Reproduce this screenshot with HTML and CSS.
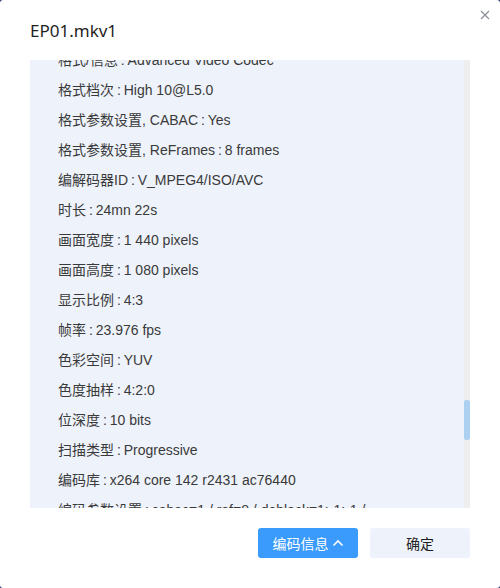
FILE: index.html
```html
<!DOCTYPE html>
<html lang="zh-CN">
<head>
<meta charset="utf-8">
<title>EP01.mkv1</title>
<link rel="stylesheet" href="styles.css">
</head>
<body>
<div class="dialog">
  <button class="close" aria-label="关闭">
    <svg width="10" height="10" viewBox="0 0 10 10"><path d="M1 1L9 9M9 1L1 9" stroke="#8a8f99" stroke-width="1.2" fill="none"/></svg>
  </button>
  <div class="title">EP01.mkv1</div>
  <div class="panel">
    <ul class="list">
      <li>格式/信息<span class="sep"> : </span>Advanced Video Codec</li>
      <li>格式档次<span class="sep"> : </span>High 10@L5.0</li>
      <li>格式参数设置, CABAC<span class="sep"> : </span>Yes</li>
      <li>格式参数设置, ReFrames<span class="sep"> : </span>8 frames</li>
      <li>编解码器ID<span class="sep"> : </span>V_MPEG4/ISO/AVC</li>
      <li>时长<span class="sep"> : </span>24mn 22s</li>
      <li>画面宽度<span class="sep"> : </span>1 440 pixels</li>
      <li>画面高度<span class="sep"> : </span>1 080 pixels</li>
      <li>显示比例<span class="sep"> : </span>4:3</li>
      <li>帧率<span class="sep"> : </span>23.976 fps</li>
      <li>色彩空间<span class="sep"> : </span>YUV</li>
      <li>色度抽样<span class="sep"> : </span>4:2:0</li>
      <li>位深度<span class="sep"> : </span>10 bits</li>
      <li>扫描类型<span class="sep"> : </span>Progressive</li>
      <li>编码库<span class="sep"> : </span>x264 core 142 r2431 ac76440</li>
      <li>编码参数设置<span class="sep"> : </span>cabac=1 / ref=8 / deblock=1:-1:-1 /</li>
    </ul>
    <div class="track"><div class="thumb"></div></div>
  </div>
  <div class="footer">
    <button class="btn primary">编码信息<svg class="chev" width="12" height="8" viewBox="0 0 12 8"><path d="M1.5 6.5L6 2L10.5 6.5" stroke="#fff" stroke-width="1.6" fill="none"/></svg></button>
    <button class="btn secondary">确定</button>
  </div>
</div>
</body>
</html>
```
FILE: styles.css
```css
html, body {
  margin: 0;
  padding: 0;
  background: #14275e;
}
body {
  width: 500px;
  height: 588px;
  font-family: "Noto Sans", "Noto Sans CJK SC", sans-serif;
}
.dialog {
  position: relative;
  width: 500px;
  height: 588px;
  background: #fff;
  border-radius: 3px;
  box-sizing: border-box;
  padding: 0 30px;
  display: flex;
  flex-direction: column;
}
.close {
  position: absolute;
  top: 10px;
  right: 10px;
  width: 10px;
  height: 10px;
  padding: 0;
  border: 0;
  background: none;
  display: flex;
}
.title {
  height: 60px;
  line-height: 62px;
  font-size: 17px;
  color: #1f1f1f;
}
.panel {
  position: relative;
  height: 448px;
  background: #eef2fa;
  overflow: hidden;
}
.list {
  list-style: none;
  margin: -15px 0 0;
  padding: 0 0 0 28px;
}
.list li {
  height: 30px;
  line-height: 30px;
  font-family: "Liberation Sans", "Noto Sans CJK SC", sans-serif;
  font-size: 14px;
  color: #3a3a3a;
  white-space: nowrap;
}
.sep {
  word-spacing: -1px;
}
.track {
  position: absolute;
  top: 0;
  right: 0;
  width: 6px;
  height: 100%;
  background: #eeeeee;
}
.thumb {
  position: absolute;
  top: 340px;
  left: 0;
  width: 6px;
  height: 40px;
  border-radius: 2px;
  background: #acd1f0;
}
.footer {
  display: flex;
  justify-content: flex-end;
  gap: 12px;
  padding-top: 20px;
}
.btn {
  width: 100px;
  height: 30px;
  border: 0;
  border-radius: 3px;
  font-family: "Noto Sans CJK SC", sans-serif;
  font-size: 14px;
  display: flex;
  align-items: center;
  justify-content: center;
  padding: 0;
}
.primary {
  background: #3a9bfc;
  color: #fff;
}
.chev {
  margin-left: 3px;
}
.secondary {
  background: #eef2fa;
  color: #1f1f1f;
}
```
